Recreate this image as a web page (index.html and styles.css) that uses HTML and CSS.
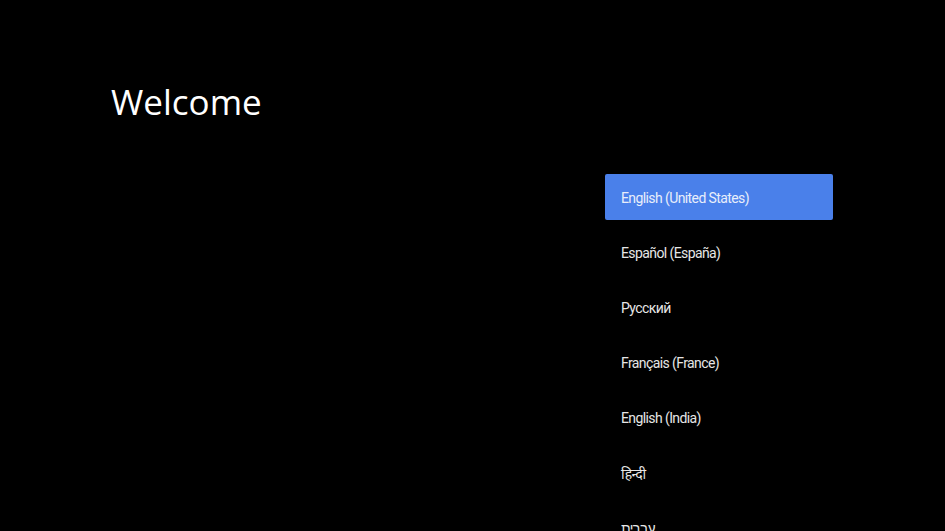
FILE: index.html
```html
<!DOCTYPE html>
<html lang="en">
<head>
<meta charset="utf-8">
<link rel="stylesheet" href="styles.css">
</head>
<body>
<div class="screen">
  <section class="intro">
    <h1 class="title">Welcome</h1>
  </section>
  <section class="langs">
    <ul class="lang-list">
      <li class="lang selected">English (United States)</li>
      <li class="lang">Español (España)</li>
      <li class="lang">Русский</li>
      <li class="lang">Français (France)</li>
      <li class="lang">English (India)</li>
      <li class="lang">हिन्दी</li>
      <li class="lang" lang="he">עברית</li>
    </ul>
  </section>
</div>
</body>
</html>
```
FILE: styles.css
```css
html, body {
  margin: 0;
  padding: 0;
  background: #000;
  height: 100%;
  overflow: hidden;
}
.screen {
  display: flex;
  width: 945px;
  height: 531px;
  overflow: hidden;
}
.intro {
  flex: 1;
  padding: 80px 0 0 111px;
}
.title {
  margin: 0;
  font-family: "Open Sans", sans-serif;
  font-weight: 400;
  font-size: 35px;
  line-height: 44px;
  color: #fff;
}
.langs {
  width: 228px;
  margin-right: 112px;
  padding-top: 174px;
}
.lang-list {
  list-style: none;
  margin: 0;
  padding: 0;
  display: flex;
  flex-direction: column;
  gap: 9px;
}
.lang {
  height: 46px;
  box-sizing: border-box;
  display: flex;
  align-items: center;
  padding: 2px 0 0 16px;
  font-family: "Roboto", "Noto Sans", sans-serif;
  font-size: 14px;
  letter-spacing: -0.6px;
  color: #e6e6e6;
  border-radius: 2px;
}
.lang.selected {
  background: #4a80ea;
  color: #e8eefb;
}
```
